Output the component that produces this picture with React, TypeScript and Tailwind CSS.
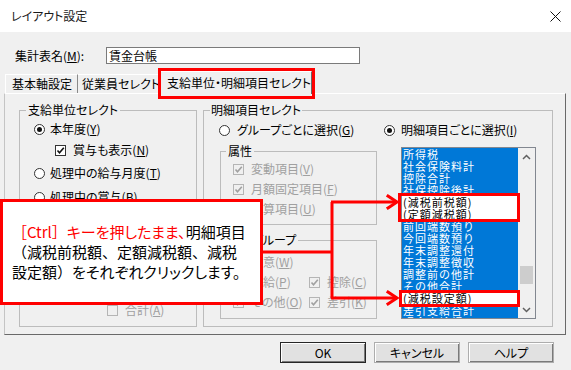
import React from "react";

const LIST_ITEMS: { label: string; plain?: boolean }[] = [
  { label: "所得税" },
  { label: "社会保険料計" },
  { label: "控除合計" },
  { label: "社保控除後計" },
  { label: "(減税前税額)", plain: true },
  { label: "(定額減税額)", plain: true },
  { label: "前回端数預り" },
  { label: "今回端数預り" },
  { label: "年末調整還付" },
  { label: "年末調整徴収" },
  { label: "調整前の他計" },
  { label: "その他合計" },
  { label: "(減税設定額)", plain: true },
  { label: "差引支給合計" },
  { label: "現金支給額" },
];

const Radio = ({ checked = false }: { checked?: boolean }) => (
  <span className="w-[11px] h-[11px] rounded-full border border-[#333] bg-white flex items-center justify-center shrink-0">
    {checked && <span className="w-[5px] h-[5px] rounded-full bg-[#111]" />}
  </span>
);

const Check = ({ checked = false, disabled = false }: { checked?: boolean; disabled?: boolean }) => (
  <span
    className={`w-[11px] h-[11px] border flex items-center justify-center shrink-0 ${
      disabled ? "border-[#b5b5b5] bg-[#f0f0f0]" : "border-[#333] bg-white"
    }`}
  >
    {checked && (
      <svg width="9" height="9" viewBox="0 0 9 9">
        <path
          d="M1.5 4.5 L3.5 6.8 L7.8 1.8"
          fill="none"
          stroke={disabled ? "#a0a0a0" : "#111"}
          strokeWidth="1.6"
        />
      </svg>
    )}
  </span>
);

const Key = ({ k }: { k: string }) => <span className="underline underline-offset-1">{k}</span>;

const App: React.FC = () => {
  return (
    <div className="relative w-[571px] h-[370px] overflow-hidden bg-[#f0f0f0] text-[12px] leading-[14px] text-black font-['Noto_Sans_CJK_JP','Noto_Sans',sans-serif] [font-feature-settings:'palt']">
      {/* Title bar */}
      <div className="h-[32px] bg-white flex items-center justify-between pl-[11px] pr-[10px]">
        <span className="text-[#1a1a1a]">レイアウト設定</span>
        <svg width="11" height="11" viewBox="0 0 11 11">
          <path d="M0.5 0.5 L10.5 10.5 M10.5 0.5 L0.5 10.5" stroke="#111" strokeWidth="1" />
        </svg>
      </div>

      {/* Name row */}
      <div className="flex items-center mt-[15px] pl-[15px] h-[17px]">
        <span className="w-[91px]">
          集計表名(<Key k="M" />):
        </span>
        <div className="w-[254px] h-[17px] bg-white border border-[#7a7a7a] pl-[2px] leading-[15px]">賃金台帳</div>
      </div>

      {/* Tabs */}
      <div className="flex items-end h-[29px] pl-[5px] whitespace-nowrap">
        <div className="h-[19px] w-[73px] px-[6px] flex items-center border-l border-t border-white border-r border-r-[#8a8a8a]">
          基本軸設定
        </div>
        <div className="h-[19px] w-[81px] pl-[4px] flex items-center border-t border-white border-r border-r-[#8a8a8a]">
          従業員セレクト
        </div>
        <div className="relative h-[23px] w-[153px] flex items-center pl-[7px] border-l border-t border-white border-r border-r-[#696969] -mb-[1px] bg-[#f0f0f0] z-10">
          支給単位・明細項目セレクト
          <span className="absolute -left-[2px] -top-[4px] w-[157px] h-[31px] border-[3px] border-[#ff0000]" />
        </div>
      </div>

      {/* Tab panel */}
      <div className="ml-[4px] w-[562px] h-[242px] border border-l-[#c4c4c4] border-t-white border-r-[#696969] border-b-[#696969] pl-[14px] pt-[9px] flex gap-[6px]">
        {/* Left group */}
        <fieldset className="w-[178px] h-[224px] border border-[#bcbcbc]">
          <legend className="ml-[6px] px-[2px]">支給単位セレクト</legend>
          <div className="flex flex-col pl-[14px]">
            <div className="flex items-center gap-[5px] h-[14px] mt-[5px]">
              <Radio checked />
              <span>
                本年度(<Key k="Y" />)
              </span>
            </div>
            <div className="flex items-center gap-[7px] h-[14px] mt-[7px] pl-[21px]">
              <Check checked />
              <span>
                賞与も表示(<Key k="N" />)
              </span>
            </div>
            <div className="flex items-center gap-[5px] h-[14px] mt-[9px]">
              <Radio />
              <span>
                処理中の給与月度(<Key k="T" />)
              </span>
            </div>
            <div className="flex items-center gap-[5px] h-[14px] mt-[10px]">
              <Radio />
              <span>
                処理中の賞与(<Key k="B" />)
              </span>
            </div>
            <div className="flex items-center gap-[7px] h-[14px] mt-[99px] pl-[73px] text-[#a0a0a0]">
              <Check disabled />
              <span>
                合計(<Key k="A" />)
              </span>
            </div>
          </div>
        </fieldset>

        {/* Right group */}
        <fieldset className="w-[350px] h-[224px] border border-[#bcbcbc]">
          <legend className="ml-[6px] px-[1px]">明細項目セレクト</legend>
          <div className="flex flex-col pl-[15px]">
            <div className="flex items-center h-[14px] mt-[6px]">
              <div className="w-[165px] flex items-center gap-[7px]">
                <Radio />
                <span>
                  グループごとに選択(<Key k="G" />)
                </span>
              </div>
              <div className="flex items-center gap-[6px]">
                <Radio checked />
                <span>
                  明細項目ごとに選択(<Key k="I" />)
                </span>
              </div>
            </div>

            <div className="flex items-start mt-[7px] pl-[1px]">
              <div className="w-[157px] flex flex-col gap-[8px]">
                <fieldset className="h-[81px] border border-[#bcbcbc]">
                  <legend className="ml-[5px] px-[2px]">属性</legend>
                  <div className="flex flex-col gap-[6px] pl-[12px] pt-[4px] text-[#a0a0a0]">
                    <div className="flex items-center gap-[7px] h-[14px]">
                      <Check checked disabled />
                      <span>
                        変動項目(<Key k="V" />)
                      </span>
                    </div>
                    <div className="flex items-center gap-[7px] h-[14px]">
                      <Check checked disabled />
                      <span>
                        月額固定項目(<Key k="F" />)
                      </span>
                    </div>
                    <div className="flex items-center gap-[7px] h-[14px]">
                      <Check checked disabled />
                      <span>
                        合算項目(<Key k="U" />)
                      </span>
                    </div>
                  </div>
                </fieldset>
                <fieldset className="h-[86px] border border-[#bcbcbc]">
                  <legend className="ml-[5px] px-[2px]">項目グループ</legend>
                  <div className="flex flex-col gap-[6px] pl-[12px] pt-[8px] text-[#a0a0a0]">
                    <div className="flex items-center gap-[7px] h-[14px]">
                      <Check checked disabled />
                      <span>
                        任意(<Key k="W" />)
                      </span>
                    </div>
                    <div className="flex items-center h-[14px]">
                      <div className="w-[76px] flex items-center gap-[7px]">
                        <Check checked disabled />
                        <span>
                          支給(<Key k="P" />)
                        </span>
                      </div>
                      <div className="flex items-center gap-[7px]">
                        <Check checked disabled />
                        <span>
                          控除(<Key k="C" />)
                        </span>
                      </div>
                    </div>
                    <div className="flex items-center h-[14px]">
                      <div className="w-[76px] flex items-center gap-[7px]">
                        <Check checked disabled />
                        <span>
                          その他(<Key k="O" />)
                        </span>
                      </div>
                      <div className="flex items-center gap-[7px]">
                        <Check checked disabled />
                        <span>
                          差引(<Key k="K" />)
                        </span>
                      </div>
                    </div>
                  </div>
                </fieldset>
              </div>

              {/* List box */}
              <div className="relative ml-[24px] mt-[3px] w-[135px] h-[172px] border border-[#828790] bg-white flex">
                <div className="w-[116px] h-[170px] overflow-hidden [font-feature-settings:normal] text-[11px] tracking-[1px]">
                  {LIST_ITEMS.map((item) => (
                    <div
                      key={item.label}
                      className={`h-[12px] leading-[12px] pl-[1px] whitespace-nowrap ${
                        item.plain ? "bg-white text-black" : "bg-[#0078d7] text-white"
                      }`}
                    >
                      {item.label}
                    </div>
                  ))}
                </div>
                <div className="w-[17px] bg-[#f0f0f0] flex flex-col items-center">
                  <svg width="9" height="17" viewBox="0 0 9 17" className="mt-[1px]">
                    <path d="M1 10 L4.5 6.5 L8 10" fill="none" stroke="#606060" strokeWidth="1.5" />
                  </svg>
                  <div className="w-[13px] h-[18px] bg-[#cdcdcd] mt-[100px]" />
                  <svg width="9" height="17" viewBox="0 0 9 17" className="mt-[17px]">
                    <path d="M1 7 L4.5 10.5 L8 7" fill="none" stroke="#606060" strokeWidth="1.5" />
                  </svg>
                </div>
                <span className="absolute -left-[4px] top-[45px] w-[122px] h-[29px] border-[3px] border-[#ff0000]" />
                <span className="absolute -left-[3px] top-[142px] w-[121px] h-[17px] border-[3px] border-[#ff0000]" />
              </div>
            </div>
          </div>
        </fieldset>
      </div>

      {/* Buttons */}
      <div className="flex justify-end gap-[8px] mt-[7px] pr-[17px]">
        {["OK", "キャンセル", "ヘルプ"].map((label, i) => (
          <button
            key={label}
            type="button"
            className={`w-[86px] h-[21px] bg-[#e1e1e1] flex items-center justify-center leading-[14px] ${
              i === 0
                ? "border border-[#262626] shadow-[inset_1px_1px_0_#fff,inset_-1px_-1px_0_#7a7a7a]"
                : "border border-[#adadad] shadow-[inset_1px_1px_0_#fff,inset_-1px_-1px_0_#7a7a7a]"
            }`}
          >
            {label}
          </button>
        ))}
      </div>

      {/* Callout */}
      <div className="absolute left-0 top-[199px] w-[263px] h-[106px] bg-white border-[3px] border-[#ff0000] flex flex-col justify-center pl-[9px] text-[15px] leading-[20px] [font-feature-settings:normal]">
        <div className="whitespace-nowrap">
          <span className="text-[#ff0000]">
            ［Ctrl］<span className="[font-feature-settings:'palt']">キーを押したまま、</span>
          </span>
          明細項目
        </div>
        <div className="whitespace-nowrap">（減税前税額、定額減税額、減税</div>
        <div className="whitespace-nowrap">
          設定額）<span className="[font-feature-settings:'palt']">をそれぞれクリックします。</span>
        </div>
      </div>

      {/* Arrows */}
      <svg className="absolute left-0 top-0 pointer-events-none" width="571" height="370" viewBox="0 0 571 370">
        <g fill="none" stroke="#ff0000" strokeWidth="3">
          <path d="M262 252 H332 M332 202 V298 M331 202 H397 M331 298 H397" />
          <path d="M388 196 L397 202 L388 208 M388 292 L397 298 L388 304" strokeLinecap="square" />
        </g>
      </svg>
    </div>
  );
};

export default App;
